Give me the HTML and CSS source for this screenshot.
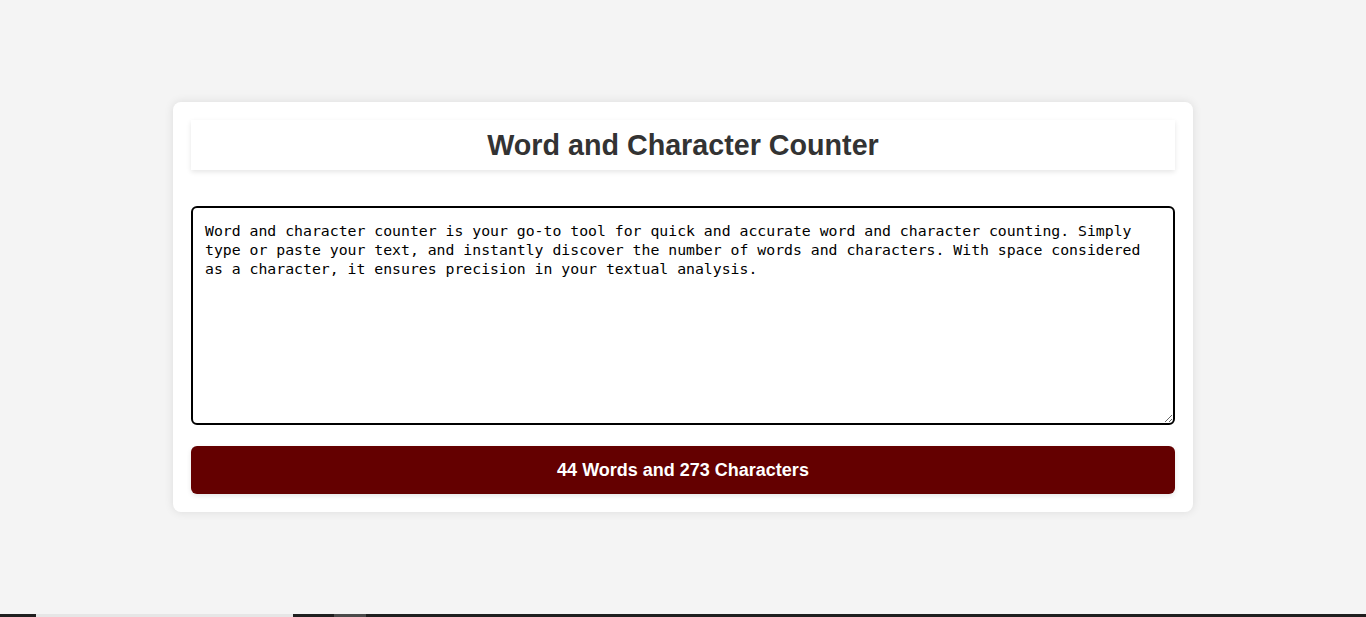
FILE: index.html
```html
<!DOCTYPE html>
<html lang="en">
<head>
<meta charset="utf-8">
<title>Word and Character Counter</title>
<link rel="stylesheet" href="styles.css">
</head>
<body>
<main class="stage">
  <section class="card">
    <header class="card-header">
      <h1 class="title">Word and Character Counter</h1>
    </header>
    <textarea class="input" id="text" autofocus spellcheck="false">Word and character counter is your go-to tool for quick and accurate word and character counting. Simply type or paste your text, and instantly discover the number of words and characters. With space considered as a character, it ensures precision in your textual analysis.</textarea>
    <div class="result">44 Words and 273 Characters</div>
  </section>
</main>
<div class="strip">
  <span class="seg seg-dark seg-a"></span>
  <span class="seg seg-light"></span>
  <span class="seg seg-dark seg-b"></span>
  <span class="seg seg-gray"></span>
  <span class="seg seg-dark seg-rest"></span>
</div>
<script>
  var t = document.getElementById('text');
  t.focus();
  t.setSelectionRange(t.value.length, t.value.length);
</script>
</body>
</html>
```

FILE: styles.css
```css
html, body {
  margin: 0;
  padding: 0;
  height: 100%;
}

body {
  background: #f4f4f4;
  font-family: "Liberation Sans", Arial, sans-serif;
  display: flex;
  flex-direction: column;
  overflow: hidden;
}

.stage {
  flex: 1;
  display: flex;
  align-items: center;
  justify-content: center;
}

.card {
  width: 1020px;
  box-sizing: border-box;
  padding: 18px;
  background: #fff;
  border-radius: 8px;
  box-shadow: 0 0 10px rgba(0, 0, 0, 0.1);
  display: flex;
  flex-direction: column;
}

.card-header {
  height: 50px;
  display: flex;
  align-items: center;
  justify-content: center;
  background: #fff;
  box-shadow: 0 2px 5px rgba(0, 0, 0, 0.1);
  margin-bottom: 36px;
}

.title {
  margin: 0;
  font-size: 28.7px;
  font-weight: bold;
  color: #333;
}

.input {
  display: block;
  box-sizing: border-box;
  width: 100%;
  height: 219px;
  padding: 13px 12px 11px 12px;
  border: 2px solid #000;
  border-radius: 6px;
  font-family: "DejaVu Sans Mono", monospace;
  font-size: 14.8px;
  line-height: 19px;
  color: #000;
  caret-color: #000;
  outline: none;
  resize: vertical;
  margin: 0 0 21px 0;
}

.result {
  height: 48px;
  display: flex;
  align-items: center;
  justify-content: center;
  background: #640000;
  color: #fff;
  border-radius: 6px;
  font-size: 18px;
  font-weight: bold;
  box-shadow: 0 2px 5px rgba(0, 0, 0, 0.1);
}

.strip {
  height: 3px;
  display: flex;
  flex-shrink: 0;
}

.seg { display: block; height: 3px; }
.seg-dark { background: #1f1f1f; }
.seg-a { width: 36px; }
.seg-light { width: 257px; background: #e6e6e6; }
.seg-b { width: 41px; }
.seg-gray { width: 32px; background: #4a4a4a; }
.seg-rest { flex: 1; }
```
